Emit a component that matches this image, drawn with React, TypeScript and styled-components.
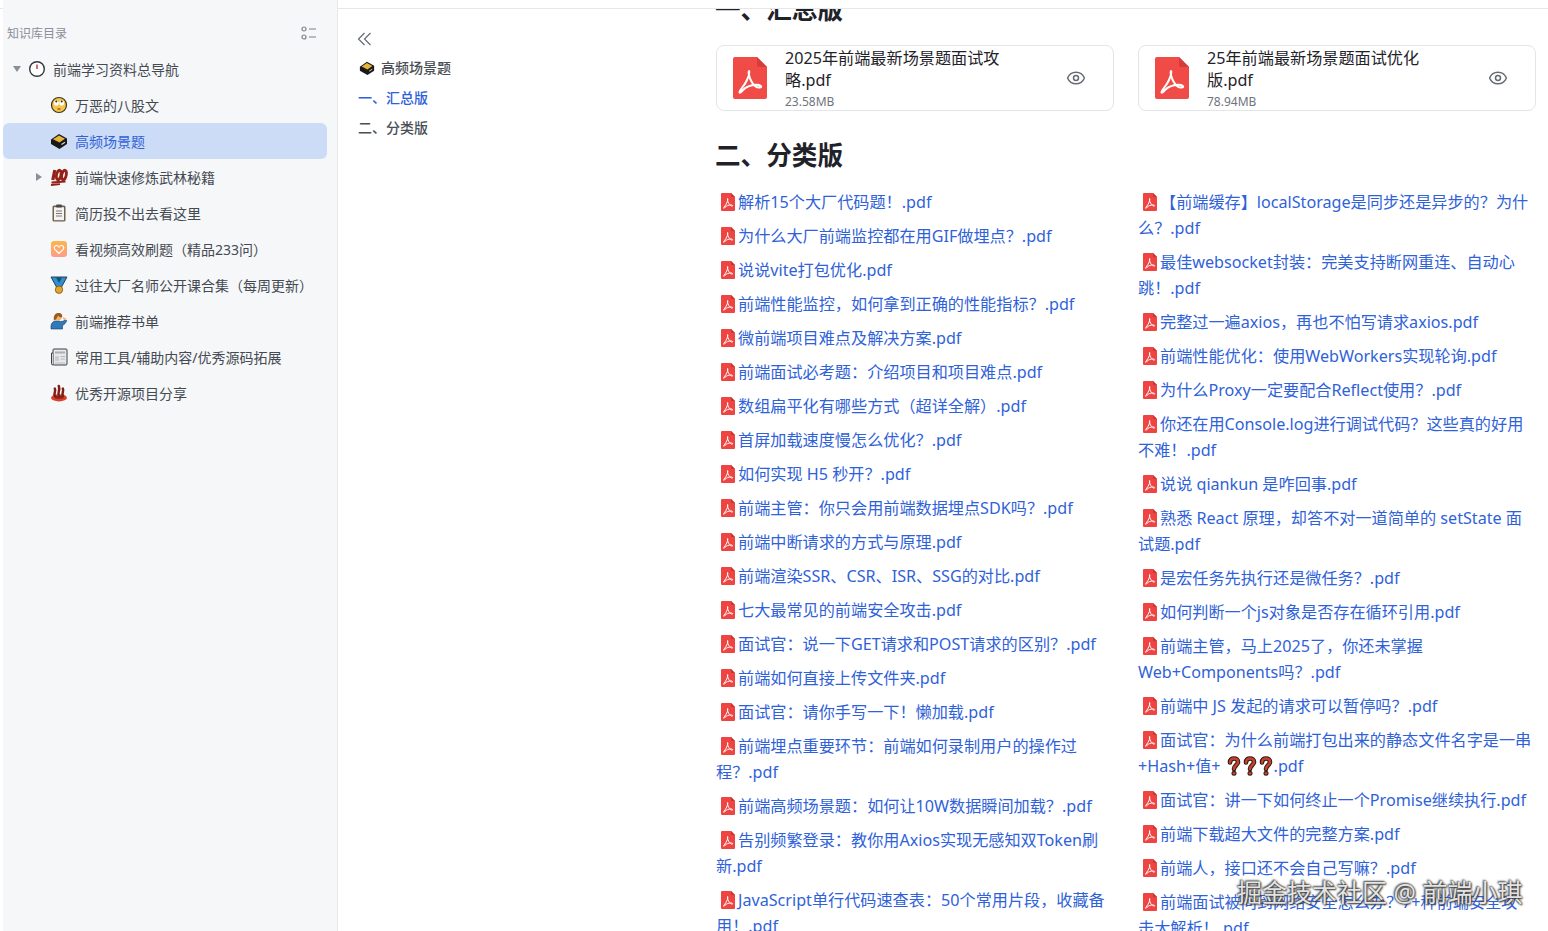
import React from 'react'
import styled, { createGlobalStyle } from 'styled-components'
import { Eye } from 'lucide-react'

const FONT = '"Noto Sans", "Noto Sans CJK SC", "Liberation Sans", sans-serif'
const BLUE = '#2f62d9'

const GlobalStyle = createGlobalStyle`
  html, body {
    margin: 0;
    height: 100%;
    background: #fff;
    overflow: hidden;
    font-family: ${FONT};
  }
`

const Page = styled.div`
  position: relative;
  display: flex;
  width: 1548px;
  height: 931px;
  overflow: hidden;
`

const Gutter = styled.div`
  width: 3px;
  height: 8px;
  border-bottom: 1px solid #e5e7eb;
  flex: none;
`

const Sidebar = styled.aside`
  flex: none;
  width: 335px;
  background: #f5f7f9;
  border-right: 1px solid #e7e9ec;
  padding-top: 22px;
  box-sizing: border-box;
`

const SideHead = styled.div`
  display: flex;
  justify-content: space-between;
  align-items: center;
  height: 22px;
  padding: 0 20px 0 4px;
  margin-bottom: 7px;
  font-size: 12px;
  color: #8a8f99;
`

const SideList = styled.ul`
  list-style: none;
  margin: 0;
  padding: 0 10px 0 0;
`

const SideRow = styled.li<{ $level: number; $active?: boolean }>`
  display: flex;
  align-items: center;
  height: 36px;
  padding-left: ${p => (p.$level === 0 ? 9 : 31)}px;
  border-radius: 6px;
  font-size: 14px;
  color: ${p => (p.$active ? BLUE : '#454a52')};
  background: ${p => (p.$active ? '#cddcf6' : 'transparent')};
  white-space: nowrap;
`

const Caret = styled.span`
  flex: none;
  display: flex;
  align-items: center;
  justify-content: center;
  width: 10px;
  height: 16px;
  margin-right: 6px;
`

const RowIcon = styled.span`
  flex: none;
  display: flex;
  width: 18px;
  height: 18px;
  margin-right: 7px;
`

const Main = styled.div`
  flex: 1;
  min-width: 0;
  display: flex;
  flex-direction: column;
`

const TopBar = styled.div`
  flex: none;
  height: 8px;
  border-bottom: 1px solid #e5e7eb;
`

const Content = styled.div`
  flex: 1;
  min-height: 0;
  display: flex;
  overflow: hidden;
`

const Toc = styled.nav`
  flex: none;
  width: 378px;
  padding: 23px 0 0 20px;
  box-sizing: border-box;
`

const Collapse = styled.div`
  display: flex;
  height: 14px;
  margin: 0 0 6px -1px;
`

const TocTitle = styled.div`
  display: flex;
  align-items: center;
  height: 30px;
  margin-bottom: 1px;
  font-size: 14px;
  font-weight: 500;
  color: #4a4f57;
`

const TocIcon = styled.span`
  display: flex;
  width: 16px;
  height: 16px;
  margin: 0 6px 0 1px;
`

const TocLink = styled.div<{ $active?: boolean }>`
  height: 30px;
  line-height: 30px;
  font-size: 14px;
  font-weight: 500;
  color: ${p => (p.$active ? BLUE : '#4a4f57')};
`

const Article = styled.article`
  flex: none;
  width: 820px;
  margin-top: -17px;
`

const Heading = styled.h2<{ $gap: number }>`
  margin: 0 0 ${p => p.$gap}px -1px;
  height: 36px;
  line-height: 36px;
  font-size: 25.6px;
  font-weight: 700;
  color: #1f2329;
`

const Columns = styled.div`
  display: grid;
  grid-template-columns: 398px 398px;
  column-gap: 24px;
`

const FileCard = styled.div`
  display: flex;
  align-items: center;
  height: 66px;
  box-sizing: border-box;
  border: 1px solid #e3e5e8;
  border-radius: 8px;
  margin-bottom: 27px;
  padding-left: 16px;
  padding-right: 27px;
`

const FileInfo = styled.div`
  flex: 1;
  align-self: flex-start;
  margin-left: 18px;
  padding-top: 1px;
  color: #1f2329;
`

const FileName = styled.div`
  width: 224px;
  font-size: 16.15px;
  line-height: 22px;
`

const FileSize = styled.div`
  font-size: 12px;
  line-height: 18px;
  margin-top: 2px;
  color: #6f747c;
`

const EyeButton = styled.span`
  display: flex;
  color: #666b73;
`

const Links = styled.ul`
  list-style: none;
  margin: 0;
  padding: 0;
`

const LinkItem = styled.li`
  margin-bottom: 8px;
  font-size: 16.15px;
  line-height: 26px;
  color: ${BLUE};
`

const PdfMark = styled.svg`
  width: 14px;
  height: 18px;
  margin: 0 3px 0 5px;
  vertical-align: -3px;
`

const Question = styled.svg<{ $lead?: boolean }>`
  width: 14px;
  height: 20px;
  margin: 0 1px 0 ${p => (p.$lead ? 6 : 1)}px;
  vertical-align: -4px;
`

const Watermark = styled.span.attrs<{ $x: number; $y: number }>(p => ({
  style: { left: p.$x, top: p.$y },
}))<{ $x: number; $y: number }>`
  position: absolute;
  transform: rotate(-16deg);
  font-size: 16px;
  color: rgba(0, 0, 0, 0.022);
  white-space: nowrap;
  pointer-events: none;
`

const Stamp = styled.div`
  position: absolute;
  left: 1237px;
  top: 875px;
  font-size: 25px;
  line-height: 34px;
  white-space: nowrap;
  color: rgba(245, 245, 245, 0.92);
  text-shadow: 0 0 2px #333, 1px 1px 2px #333, -1px -1px 2px #555;
`

const PdfLarge = () => (
  <svg width="34" height="42" viewBox="0 0 34 42">
    <path d="M2 0h22l10 10v30a2 2 0 0 1-2 2H2a2 2 0 0 1-2-2V2a2 2 0 0 1 2-2z" fill="#f04b47" />
    <path d="M24 0l10 10h-8a2 2 0 0 1-2-2z" fill="#d53d3a" />
    <path
      d="M16 14c-1 1 0 6 2.500 10.500S24 31 27 30.500s0-3-4-2.800-10 2-13 5.300-3.500 3-3.500 2c0-2 5-6 7.500-12s3-8.500 2-9z"
      fill="none"
      stroke="#fff"
      strokeWidth="2"
      strokeLinejoin="round"
    />
  </svg>
)

const PdfSmall = () => (
  <PdfMark viewBox="0 0 14 18">
    <path d="M1 0h9l4 4v13a1 1 0 0 1-1 1H1a1 1 0 0 1-1-1V1a1 1 0 0 1 1-1z" fill="#ee4542" />
    <path d="M10 0l4 4h-3a1 1 0 0 1-1-1z" fill="#c93431" />
    <path
      d="M6.600 5.500c-.4.500 0 3 1.100 4.800s2.600 3 3.600 2.800 0-1.300-1.700-1.200-4.300.9-5.500 2.300-1.500 1.300-1.500.9c0-.9 2.100-2.600 3.200-5.200s1.200-3.800.8-4.400z"
      fill="none"
      stroke="#fff"
      strokeWidth="1"
    />
  </PdfMark>
)

const QuestionMark = ({ lead }: { lead?: boolean }) => (
  <Question viewBox="0 0 14 20" $lead={lead}>
    <path
      d="M3 6.500C3 3.500 5 2.500 7 2.500s4 1.200 4 3.500c0 3-4 3.500-4 7"
      fill="none"
      stroke="#2b1a18"
      strokeWidth="4.600"
      strokeLinecap="round"
    />
    <circle cx="7" cy="17.300" r="2.500" fill="#2b1a18" />
    <path
      d="M3 6.500C3 3.500 5 2.500 7 2.500s4 1.200 4 3.500c0 3-4 3.500-4 7"
      fill="none"
      stroke="#c8402c"
      strokeWidth="2.600"
      strokeLinecap="round"
    />
    <circle cx="7" cy="17.300" r="1.500" fill="#c8402c" />
  </Question>
)

const CollapseIcon = () => (
  <svg width="15" height="14" viewBox="0 0 15 14" fill="none" stroke="#666b73" strokeWidth="1.200">
    <path d="M7.500 1L1.500 7l6 6M13.500 1l-6 6 6 6" />
  </svg>
)

const ClockIcon = () => (
  <svg viewBox="0 0 18 18" width="18" height="18">
    <circle cx="9" cy="9" r="7.300" fill="#fff" stroke="#33363b" strokeWidth="1.400" />
    <path d="M9 4.500V9" stroke="#b6443a" strokeWidth="1.500" />
  </svg>
)

const FaceIcon = () => (
  <svg viewBox="0 0 18 18" width="18" height="18">
    <circle cx="9" cy="9" r="7.500" fill="#f7c649" stroke="#3c3222" strokeWidth="1.200" />
    <ellipse cx="6.300" cy="7" rx="2.400" ry="2.600" fill="#fff" />
    <ellipse cx="11.700" cy="7" rx="2.400" ry="2.600" fill="#fff" />
    <circle cx="6.300" cy="5.600" r="1" fill="#333" />
    <circle cx="11.700" cy="5.600" r="1" fill="#333" />
    <path d="M7.500 13h3" stroke="#7a4b22" strokeWidth="1.200" />
  </svg>
)

const BoxIcon = () => (
  <svg viewBox="0 0 18 18" width="18" height="18">
    <path d="M1 7.500L9 2l8 4.500V12l-7.500 5L1 12z" fill="#191919" />
    <path d="M3 7.300L9 3.400l6 3.400-5.500 3.800z" fill="#e7b53a" />
    <path d="M11.500 12.500l3.500-2.200" stroke="#ddd" strokeWidth="1.100" />
  </svg>
)

const HundredIcon = () => (
  <svg viewBox="0 0 18 18" width="18" height="18" fill="none" stroke="#94211a">
    <path d="M4.800 2L2.800 12" strokeWidth="3.200" />
    <ellipse cx="8.700" cy="7" rx="2.200" ry="4.800" transform="rotate(12 8.700 7)" strokeWidth="2.800" />
    <ellipse cx="14" cy="7" rx="2.200" ry="4.800" transform="rotate(12 14 7)" strokeWidth="2.800" />
    <path d="M1.500 14.500L15.500 13.500M1 17l9-.8" strokeWidth="1.800" />
  </svg>
)

const ClipboardIcon = () => (
  <svg viewBox="0 0 18 18" width="18" height="18">
    <rect x="2.500" y="1.500" width="13" height="16" rx="1.500" fill="#6f6250" />
    <rect x="4" y="3.200" width="10" height="13" fill="#f6f3ee" />
    <rect x="6" y="0.500" width="6" height="3" rx="1" fill="#4a4a4a" />
    <path d="M6 7h6M6 9.500h6M6 12h6" stroke="#777" strokeWidth="1" />
  </svg>
)

const HeartIcon = () => (
  <svg viewBox="0 0 18 18" width="18" height="18">
    <defs>
      <linearGradient id="heartBg" x1="0" y1="0" x2="0" y2="1">
        <stop offset="0" stopColor="#fbb64c" />
        <stop offset="1" stopColor="#fc9c8a" />
      </linearGradient>
    </defs>
    <rect x="1" y="1" width="16" height="16" rx="3" fill="url(#heartBg)" />
    <path
      d="M9 13.500L4.800 9.300C3.500 7.800 4.600 5.500 6.500 5.500c1.100 0 2 .6 2.500 1.500.5-.9 1.400-1.500 2.500-1.500 1.900 0 3 2.300 1.700 3.800z"
      fill="none"
      stroke="#fff"
      strokeWidth="1.100"
    />
  </svg>
)

const MedalIcon = () => (
  <svg viewBox="0 0 18 18" width="18" height="18">
    <path d="M1 1h16l-5.500 10h-5z" fill="#2f8fd0" stroke="#1d3344" strokeWidth=".9" />
    <path d="M6 1.500h6L9 7z" fill="#14506f" />
    <circle cx="9" cy="13.700" r="3.700" fill="#e2a52f" stroke="#8a5d14" strokeWidth=".9" />
  </svg>
)

const PersonIcon = () => (
  <svg viewBox="0 0 18 18" width="18" height="18">
    <path d="M1 17v-3c0-3 2.500-5 5-5h3c1.500 1 5 .5 6.500-1.500l1.200 1C16 11 14 13 12.500 13.500V17z" fill="#2f79bd" stroke="#1e3e5c" strokeWidth=".6" />
    <circle cx="8" cy="5" r="3.600" fill="#f1b36d" />
    <path d="M4 8.500C3 3.500 5.500 1 8.500 1S12.800 3 12 5.500C10.500 5.500 8.500 4.500 8 3.500 7.500 5.500 6 8 4 8.500z" fill="#9c5a1f" />
    <path d="M13 6l3 1.500" stroke="#f1b36d" strokeWidth="1.800" />
  </svg>
)

const NewsIcon = () => (
  <svg viewBox="0 0 18 18" width="18" height="18">
    <rect x="3" y="1" width="14" height="16" rx="1" fill="#e6e9eb" stroke="#3c4045" strokeWidth="1" />
    <path d="M3 5H1.500v10.500A1.500 1.500 0 0 0 3 17" fill="#ccd0d4" stroke="#3c4045" strokeWidth="1" />
    <rect x="5" y="3.500" width="10" height="2" fill="#a9afb5" />
    <rect x="5" y="8" width="4" height="5" fill="#c9cdd1" />
    <path d="M10.500 8.500H15M10.500 11H15M5 15h10" stroke="#b3b8bd" strokeWidth="1" />
  </svg>
)

const SpringIcon = () => (
  <svg viewBox="0 0 18 18" width="18" height="18">
    <ellipse cx="9" cy="13.800" rx="8" ry="3.600" fill="#d9402e" />
    <ellipse cx="9" cy="13.200" rx="4.500" ry="1.500" fill="#8e2318" />
    <path
      d="M5 12c-2-3 1.500-4-.2-7.500M9 12c-2-3.500 1.500-5-.2-10M13 12c-2-3 1.500-4-.2-7.500"
      fill="none"
      stroke="#7f1f15"
      strokeWidth="2.500"
      strokeLinecap="round"
    />
  </svg>
)

const sideItems = [
  { title: '万恶的八股文', icon: <FaceIcon /> },
  { title: '高频场景题', icon: <BoxIcon />, active: true },
  { title: '前端快速修炼武林秘籍', icon: <HundredIcon />, caret: true },
  { title: '简历投不出去看这里', icon: <ClipboardIcon /> },
  { title: '看视频高效刷题（精品233问）', icon: <HeartIcon /> },
  { title: '过往大厂名师公开课合集（每周更新）', icon: <MedalIcon /> },
  { title: '前端推荐书单', icon: <PersonIcon /> },
  { title: '常用工具/辅助内容/优秀源码拓展', icon: <NewsIcon /> },
  { title: '优秀开源项目分享', icon: <SpringIcon /> },
]

const files = [
  { name: '2025年前端最新场景题面试攻略.pdf', size: '23.58MB' },
  { name: '25年前端最新场景题面试优化版.pdf', size: '78.94MB' },
]

const leftLinks = [
  '解析15个大厂代码题！.pdf',
  '为什么大厂前端监控都在用GIF做埋点？.pdf',
  '说说vite打包优化.pdf',
  '前端性能监控，如何拿到正确的性能指标？.pdf',
  '微前端项目难点及解决方案.pdf',
  '前端面试必考题：介绍项目和项目难点.pdf',
  '数组扁平化有哪些方式（超详全解）.pdf',
  '首屏加载速度慢怎么优化？.pdf',
  '如何实现 H5 秒开？.pdf',
  '前端主管：你只会用前端数据埋点SDK吗？.pdf',
  '前端中断请求的方式与原理.pdf',
  '前端渲染SSR、CSR、ISR、SSG的对比.pdf',
  '七大最常见的前端安全攻击.pdf',
  '面试官：说一下GET请求和POST请求的区别？.pdf',
  '前端如何直接上传文件夹.pdf',
  '面试官：请你手写一下！懒加载.pdf',
  '前端埋点重要环节：前端如何录制用户的操作过程？.pdf',
  '前端高频场景题：如何让10W数据瞬间加载？.pdf',
  '告别频繁登录：教你用Axios实现无感知双Token刷新.pdf',
  'JavaScript单行代码速查表：50个常用片段，收藏备用！.pdf',
]

const rightLinks: React.ReactNode[] = [
  '【前端缓存】localStorage是同步还是异步的？为什么？.pdf',
  '最佳websocket封装：完美支持断网重连、自动心跳！.pdf',
  '完整过一遍axios，再也不怕写请求axios.pdf',
  '前端性能优化：使用WebWorkers实现轮询.pdf',
  '为什么Proxy一定要配合Reflect使用？.pdf',
  '你还在用Console.log进行调试代码？这些真的好用不难！.pdf',
  '说说 qiankun 是咋回事.pdf',
  '熟悉 React 原理，却答不对一道简单的 setState 面试题.pdf',
  '是宏任务先执行还是微任务？.pdf',
  '如何判断一个js对象是否存在循环引用.pdf',
  '前端主管，马上2025了，你还未掌握Web+Components吗？.pdf',
  '前端中 JS 发起的请求可以暂停吗？.pdf',
  <>
    面试官：为什么前端打包出来的静态文件名字是一串+Hash+值+
    <QuestionMark lead />
    <QuestionMark />
    <QuestionMark />
    .pdf
  </>,
  '面试官：讲一下如何终止一个Promise继续执行.pdf',
  '前端下载超大文件的完整方案.pdf',
  '前端人，接口还不会自己写嘛？.pdf',
  <>
    前端面试被问到网络安全怎么办？7+种前端安全攻
    <br />
    击大解析！.pdf
  </>,
]

const marks: { x: number; y: number }[] = []
for (let row = 0; row < 9; row++) {
  for (let col = 0; col < 8; col++) {
    marks.push({ x: 70 + col * 218 - (row % 2) * 40, y: 40 + row * 110 })
  }
}

const LinkList = ({ items }: { items: React.ReactNode[] }) => (
  <Links>
    {items.map((item, i) => (
      <LinkItem key={i}>
        <PdfSmall />
        {item}
      </LinkItem>
    ))}
  </Links>
)

export default function App() {
  return (
    <Page>
      <GlobalStyle />
      <Gutter />
      <Sidebar>
        <SideHead>
          知识库目录
          <svg width="16" height="14" viewBox="0 0 16 14" fill="none" stroke="#7d828a" strokeWidth="1.200">
            <circle cx="3" cy="3" r="2" />
            <circle cx="3" cy="11" r="2" />
            <path d="M8 3h7M8 11h7" />
          </svg>
        </SideHead>
        <SideList>
          <SideRow $level={0}>
            <Caret>
              <svg width="8" height="6" viewBox="0 0 8 6"><path d="M0 0h8L4 6z" fill="#8a8f99" /></svg>
            </Caret>
            <RowIcon><ClockIcon /></RowIcon>
            前端学习资料总导航
          </SideRow>
          {sideItems.map(item => (
            <SideRow key={item.title} $level={1} $active={item.active}>
              <Caret>
                {item.caret && <svg width="6" height="8" viewBox="0 0 6 8"><path d="M0 0l6 4-6 4z" fill="#8a8f99" /></svg>}
              </Caret>
              <RowIcon>{item.icon}</RowIcon>
              {item.title}
            </SideRow>
          ))}
        </SideList>
      </Sidebar>
      <Main>
        <TopBar />
        <Content>
          <Toc>
            <Collapse><CollapseIcon /></Collapse>
            <TocTitle>
              <TocIcon><BoxIcon /></TocIcon>
              高频场景题
            </TocTitle>
            <TocLink $active>一、汇总版</TocLink>
            <TocLink>二、分类版</TocLink>
          </Toc>
          <Article>
            <Heading $gap={17}>一、汇总版</Heading>
            <Columns>
              {files.map(file => (
                <FileCard key={file.name}>
                  <PdfLarge />
                  <FileInfo>
                    <FileName>{file.name}</FileName>
                    <FileSize>{file.size}</FileSize>
                  </FileInfo>
                  <EyeButton><Eye size={20} strokeWidth={1.8} /></EyeButton>
                </FileCard>
              ))}
            </Columns>
            <Heading $gap={15}>二、分类版</Heading>
            <Columns>
              <LinkList items={leftLinks} />
              <LinkList items={rightLinks} />
            </Columns>
          </Article>
        </Content>
      </Main>
      {marks.map((m, i) => (
        <Watermark key={i} $x={m.x} $y={m.y}>宁涛 27846</Watermark>
      ))}
      <Stamp>掘金技术社区 @ 前端小琪</Stamp>
    </Page>
  )
}
